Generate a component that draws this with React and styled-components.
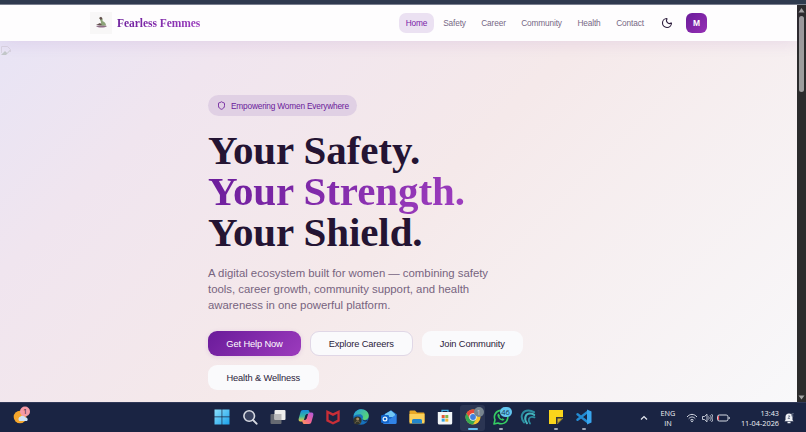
import React from 'react';
import styled, { createGlobalStyle } from 'styled-components';
import { Moon, Shield } from 'lucide-react';

const GlobalStyle = createGlobalStyle`
  * {
    box-sizing: border-box;
  }
  body {
    margin: 0;
    overflow: hidden;
    font-family: 'Liberation Sans', Arial, sans-serif;
  }
`;

const Screen = styled.div`
  display: flex;
  flex-direction: column;
  width: 806px;
  height: 432px;
  overflow: hidden;
`;

const WindowEdge = styled.div`
  flex: none;
  height: 5px;
  background: #2f3c4e;
  border-bottom: 1px solid #7b838e;
`;

const Browser = styled.div`
  display: flex;
  flex: 1;
  min-height: 0;
`;

const Page = styled.main`
  display: flex;
  flex-direction: column;
  flex: 1;
  min-width: 0;
`;

const Header = styled.header`
  position: relative;
  display: flex;
  flex: none;
  align-items: center;
  height: 36px;
  padding: 0 90px;
  background: #fefdfe;
  box-shadow: 0 2px 16px rgba(106, 27, 154, 0.1);
`;

const LogoBox = styled.div`
  display: flex;
  width: 22px;
  height: 22px;
  background: #f8f7f7;
`;

const Brand = styled.span`
  margin-left: 5px;
  font-family: 'Liberation Serif', 'Times New Roman', serif;
  font-weight: 700;
  font-size: 11.5px;
  line-height: 14px;
  letter-spacing: -0.05px;
  color: transparent;
  background: linear-gradient(135deg, #6a1b9a, #9c3fbf);
  background-clip: text;
`;

const Nav = styled.nav`
  display: flex;
  margin-left: auto;
  gap: 4px;
`;

const NavLink = styled.a`
  display: flex;
  align-items: center;
  justify-content: center;
  width: ${(props) => props.$width}px;
  height: 20px;
  border-radius: 7px;
  font-size: 8.3px;
  letter-spacing: -0.14px;
  white-space: nowrap;
  color: ${(props) => (props.$active ? '#7a22a8' : '#776885')};
  background: ${(props) => (props.$active ? '#ebe1f2' : 'transparent')};
`;

const ThemeButton = styled.button`
  display: flex;
  margin: 0 13px 0 12px;
  padding: 0;
  border: 0;
  background: none;
  color: #2a1a3a;
`;

const Avatar = styled.div`
  width: 21px;
  height: 20px;
  border-radius: 6px;
  font-weight: 700;
  font-size: 8.5px;
  line-height: 21px;
  text-align: center;
  color: #fff;
  background: linear-gradient(135deg, #6a1b9a, #9730b5);
`;

const Hero = styled.section`
  display: flex;
  flex: 1;
  min-height: 0;
  background: linear-gradient(135deg, #e8e4f5 0%, #f0e5ef 20%, #f5e9ea 50%, #f8f8fa 100%);
`;

const MissingImage = styled.div`
  width: 208px;
  padding: 1px;
`;

const HeroContent = styled.div`
  width: 325px;
  padding-top: 54px;
`;

const Badge = styled.div`
  display: flex;
  align-items: center;
  gap: 5px;
  width: 149px;
  height: 21px;
  padding-left: 9px;
  border-radius: 11px;
  font-size: 8.3px;
  letter-spacing: -0.19px;
  white-space: nowrap;
  color: #6a1b9a;
  background: #e0d0e4;
`;

const Title = styled.h1`
  margin: 14px 0 0;
  font-family: 'Liberation Serif', 'Times New Roman', serif;
  font-weight: 700;
  font-size: 41px;
  line-height: 41px;
  letter-spacing: -0.1px;
  white-space: nowrap;
  color: #241433;
`;

const TitleLine = styled.span`
  display: block;
`;

// the extra padding keeps the descender inside the clipped gradient
const Accent = styled(TitleLine)`
  width: 260px;
  margin-bottom: -5px;
  padding-bottom: 5px;
  color: transparent;
  background: linear-gradient(135deg, #6a1b9a, #a03fc0);
  background-clip: text;
`;

const Lead = styled.p`
  margin: 12px 0 0;
  font-size: 11.4px;
  line-height: 16px;
  letter-spacing: -0.02px;
  white-space: nowrap;
  color: #776480;
`;

const Actions = styled.div`
  display: flex;
  flex-wrap: wrap;
  gap: 9px;
  margin-top: 18px;
`;

const Button = styled.button`
  width: ${(props) => props.$width}px;
  height: 25px;
  padding: 0;
  border: ${(props) => (props.$outlined ? '1px solid #e0d7e6' : '0')};
  border-radius: 9px;
  font-family: inherit;
  font-size: 9.3px;
  letter-spacing: -0.13px;
  white-space: nowrap;
  color: ${(props) => (props.$primary ? '#fff' : '#2a1a3a')};
  background: ${(props) => (props.$primary ? 'linear-gradient(135deg, #6a1b9a, #9c3bbd)' : '#fafafc')};
  box-shadow: ${(props) => (props.$primary ? '0 1px 5px rgba(106, 27, 154, 0.12)' : 'none')};
`;

const Scrollbar = styled.div`
  display: flex;
  flex-direction: column;
  align-items: center;
  justify-content: space-between;
  width: 9px;
  padding: 3px 0 2px;
  background: #2b2b2c;
`;

const ScrollTop = styled.div`
  display: flex;
  flex-direction: column;
  align-items: center;
  gap: 3px;
`;

const Thumb = styled.div`
  width: 5px;
  height: 76px;
  border-radius: 3px;
  background: #9d9d9d;
`;

const TaskbarRow = styled.footer`
  display: grid;
  grid-template-columns: 208px 390px 1fr;
  flex: none;
  height: 30px;
  border-top: 1px solid #303858;
  font-family: 'Open Sans', 'Noto Sans', sans-serif;
  color: #f0f2f8;
  background: #1a2443;
`;

const Weather = styled.div`
  padding: 3px 0 0 13px;
`;

const Apps = styled.div`
  display: flex;
`;

const AppSlot = styled.div`
  position: relative;
  display: flex;
  align-items: center;
  justify-content: center;
  flex: 1;
`;

const AppFrame = styled.div`
  display: flex;
  align-items: center;
  justify-content: center;
  width: 25px;
  height: 26px;
  padding-bottom: 1px;
  border-radius: 3px;
  background: ${(props) => (props.$active ? '#2b3553' : 'transparent')};
`;

const RunningMark = styled.span`
  position: absolute;
  bottom: 2px;
  left: 50%;
  width: ${(props) => (props.$active ? 10 : 4)}px;
  height: 2px;
  border-radius: 1px;
  transform: translateX(-50%);
  background: ${(props) => (props.$active ? '#63c0ee' : '#a0a6b6')};
`;

const Count = styled.span`
  position: absolute;
  top: 4px;
  left: ${(props) => props.$left}px;
  width: ${(props) => props.$width}px;
  height: 10px;
  border-radius: 5px;
  font-size: 7.5px;
  line-height: 10px;
  text-align: center;
  color: ${(props) => props.$color};
  background: ${(props) => props.$background};
`;

const Tray = styled.div`
  display: flex;
  align-items: center;
  padding-left: 42px;
`;

const TrayText = styled.div`
  width: ${(props) => props.$width}px;
  margin-left: ${(props) => props.$left}px;
  font-size: 7.3px;
  line-height: 10px;
  text-align: ${(props) => props.$align};
  white-space: nowrap;
`;

const TrayIcons = styled.div`
  display: flex;
  align-items: center;
  gap: 4px;
  margin-left: 8px;
`;

const BellIcon = styled.svg`
  margin-left: 5px;
`;

function Icon({ children }) {
  return (
    <svg width="16" height="16" viewBox="0 0 16 16" fill="none">
      {children}
    </svg>
  );
}

const apps = [
  {
    id: 'start',
    icon: (
      <>
        <defs>
          <linearGradient id="start" x1="0" y1="0" x2="1" y2="1">
            <stop stopColor="#8be0fc" />
            <stop offset="1" stopColor="#1ba0ea" />
          </linearGradient>
        </defs>
        <path d="M.5.5h7.1v7.100H.5zM8.300.5h7.200v7.100H8.300zM.5 8.300h7.100v7.200H.5zM8.300 8.300h7.200v7.200H8.300z" fill="url(#start)" />
      </>
    )
  },
  {
    id: 'search',
    icon: (
      <>
        <circle cx="7.2" cy="7" r="5.3" fill="#39425f" stroke="#d5d8e0" strokeWidth="1.6" />
        <path d="m11 11 3.6 3.7" stroke="#d5d8e0" strokeWidth="1.9" strokeLinecap="round" />
      </>
    )
  },
  {
    id: 'tasks',
    icon: (
      <>
        <rect x=".5" y="5" width="11" height="10" rx="1" fill="#666a72" />
        <rect x="4.5" y="1" width="11" height="10" rx="1" fill="#eeeeec" />
        <path d="M4.5 5h7v6h-6a1 1 0 0 1-1-1z" fill="#b9b9b9" />
      </>
    )
  },
  {
    id: 'copilot',
    icon: (
      <>
        <defs>
          <linearGradient id="pilotA" x1="0" y1="0" x2="0" y2="1">
            <stop stopColor="#1689df" />
            <stop offset=".55" stopColor="#36b7a0" />
            <stop offset="1" stopColor="#f3cd3e" />
          </linearGradient>
          <linearGradient id="pilotB" x1="1" y1="0" x2="0" y2="1">
            <stop stopColor="#a759e4" />
            <stop offset=".5" stopColor="#ef6297" />
            <stop offset="1" stopColor="#ff9856" />
          </linearGradient>
        </defs>
        <path d="M5 1h4.5c1.200 0 1.600.6 2 2l.5 2H9.500C8 5 7.500 6 7 7.500l-1 3.200C5.600 12 5 12.500 4 12.500H2.500C.6 12.500.3 11 .8 9.200l1.700-6C2.900 1.800 3.800 1 5 1z" fill="url(#pilotA)" />
        <path d="M11 15H6.500c-1.200 0-1.600-.6-2-2L4 11h2.500C8 11 8.500 10 9 8.500l1-3.200c.4-1.300 1-1.800 2-1.800h1.500c1.900 0 2.200 1.500 1.700 3.300l-1.700 6c-.4 1.400-1.300 2.200-2.500 2.200z" fill="url(#pilotB)" />
        <path d="M7.900 5.700 9.300 5 8.200 10l-1.500.7z" fill="#1a2443" />
      </>
    )
  },
  {
    id: 'mcafee',
    icon: <path d="m1.300 1 6.700 3.300L14.700 1v11.200L8 15.500l-6.700-3.300zM3.600 4.700v6l4.400 2.200 4.400-2.200v-6L8 6.900z" fill="#c92e37" />
  },
  {
    id: 'edge',
    icon: (
      <>
        <defs>
          <linearGradient id="edge" x1="0" y1="0" x2="1" y2=".5">
            <stop stopColor="#249de2" />
            <stop offset="1" stopColor="#58d576" />
          </linearGradient>
        </defs>
        <circle cx="8" cy="8" r="7.7" fill="#1671bd" />
        <path d="M.6 7.200C1.300 3 4.500.3 8.300.3c4.500 0 7.500 3.200 7.500 6.400 0 2.500-1.900 4.200-4.500 4.200-1.600 0-2.300-.7-1.600-1.700.8-1.400-.2-4-3-4-2.400 0-4.600.7-6.100 2z" fill="url(#edge)" />
        <path d="M9.500 9.300c-.3 2 2.700 3 5.500 1.400l-1.300 1.600c-2 .8-4.700-.8-4.200-3z" fill="#1a2443" />
        <circle cx="4.5" cy="11.5" r="4" fill="#343629" />
        <circle cx="4.7" cy="10" r="1.5" fill="#a98c60" />
        <path d="M2 14.500c.3-3 4.800-3 5.200 0" stroke="#766b51" />
      </>
    )
  },
  {
    id: 'mail',
    icon: (
      <>
        <path d="m2 6 8-4.800L15.500 5v9.500H2z" fill="#1764c5" />
        <path d="m4 5 6-3.500L14 5v3H4z" fill="#71c7f4" />
        <path d="m2 7 7 3 6.500-5v8.500a1.500 1.500 0 0 1-1.500 1.500H3.500A1.500 1.500 0 0 1 2 13.500z" fill="#3183e6" />
        <rect y="6" width="8" height="8" rx="1.2" fill="#1264c9" />
        <circle cx="4" cy="10" r="1.9" stroke="#e9f5ff" strokeWidth="1.2" />
      </>
    )
  },
  {
    id: 'files',
    icon: (
      <>
        <path d="M.5 2.500a1 1 0 0 1 1-1H6l2 2h6.500a1 1 0 0 1 1 1V13H.5z" fill="#e8a927" />
        <path d="M.5 5h15v9.500H.5z" fill="#fbd15b" />
        <path d="M3 14.500v-3a1.500 1.500 0 0 1 1.500-1.500h7a1.500 1.500 0 0 1 1.500 1.500v3z" fill="#2386cb" />
      </>
    )
  },
  {
    id: 'store',
    icon: (
      <>
        <path d="M5 4V1.300h6V4" stroke="#42aee4" strokeWidth="1.2" />
        <path d="M.8 3h14.400v11a1.500 1.500 0 0 1-1.500 1.500H2.300A1.500 1.500 0 0 1 .8 14z" fill="#f2f6f9" />
        <path d="M4.700 6h3v3h-3z" fill="#e65a38" />
        <path d="M8.300 6h3v3h-3z" fill="#80b84c" />
        <path d="M4.700 9.600h3v3h-3z" fill="#35a5df" />
        <path d="M8.300 9.600h3v3h-3z" fill="#f4ba35" />
      </>
    )
  },
  {
    id: 'chrome',
    active: true,
    running: true,
    count: { text: '1', left: 15, width: 10, color: '#c9ced2', background: '#78858f' },
    icon: (
      <>
        <circle cx="8" cy="8" r="7.5" fill="#f6c52e" />
        <path d="M1.500 4.250A7.500 7.500 0 0 1 14.500 4.250H8L4.750 9.870z" fill="#e6493a" />
        <path d="M1.500 4.250A7.500 7.500 0 0 0 8 15.500L11.250 9.870H4.750z" fill="#36a853" />
        <circle cx="8" cy="8" r="3.7" fill="#f3f6f7" />
        <circle cx="8" cy="8" r="2.9" fill="#427fdd" />
      </>
    )
  },
  {
    id: 'whatsapp',
    running: true,
    count: { text: '46', left: 13, width: 12, color: '#173650', background: '#61c4ef' },
    icon: (
      <>
        <path d="m1 15 1-4.200A6.700 6.700 0 1 1 5 14z" stroke="#35cc63" strokeWidth="1.6" strokeLinejoin="round" />
        <path d="M5.500 4.500 4.400 5.800c0 3 2.700 5.600 5.600 5.900l1.500-1.200-2-1.200-.9.700c-1-.5-1.800-1.300-2.200-2.300l.7-.8z" fill="#35cc63" />
      </>
    )
  },
  {
    id: 'waves',
    icon: (
      <g strokeLinecap="round">
        <path d="M4 13.500C-1 7 3 1.500 8.500 1.500c2.400 0 4 .7 5.500 1.700" stroke="#2b8da0" strokeWidth="2" />
        <path d="M7 14.300C3.500 9.500 5.500 4.600 10 4.600c1.800 0 3 .5 4.200 1.300" stroke="#43b3bd" strokeWidth="2" />
        <path d="M10 14.600C7.500 11 9 7.800 12 7.800c1 0 1.800.2 2.500.6" stroke="#2b8da0" strokeWidth="1.8" />
      </g>
    )
  },
  {
    id: 'notes',
    running: true,
    icon: (
      <>
        <path d="M1 1h14v14H1z" fill="#fad51b" />
        <path d="M8 8h7v1l-6 6H8z" fill="#33353a" />
        <path d="M9.500 9.500H14L9.500 14z" fill="#d5b32d" />
        <path d="M15 9.500V15H9.500z" fill="#1a2443" />
      </>
    )
  },
  {
    id: 'code',
    running: true,
    icon: (
      <>
        <path d="m11.500 3-10 7.800M1.500 5.200l10 7.800" stroke="#238bd3" strokeWidth="2.4" strokeLinecap="round" />
        <path d="m11 .5 4.500 2v11l-4.500 2z" fill="#38a5ee" />
      </>
    )
  }
];

const links = [
  { label: 'Home', width: 35 },
  { label: 'Safety', width: 33 },
  { label: 'Career', width: 37 },
  { label: 'Community', width: 51 },
  { label: 'Health', width: 36 },
  { label: 'Contact', width: 38 }
];

function SiteHeader() {
  return (
    <Header>
      <LogoBox>
        <svg width="22" height="22" viewBox="0 0 22 22" fill="none">
          <path d="M6 14c2 2 9 2 11 0-2-1-9-1-11 0z" fill="#8e6d86" />
          <path d="M9.500 6c2-1 4 1 3 3 2 1 3.500 2 3.500 4.500H9.500c1.500-2 2-3 1-4.500z" fill="#8ca378" />
          <path d="m9 6 2-1.200 1.500 1.500L11 8zM6 13l4-2 2 2z" fill="#604e4a" />
        </svg>
      </LogoBox>
      <Brand>Fearless Femmes</Brand>
      <Nav>
        {links.map((link, index) => (
          <NavLink key={link.label} $width={link.width} $active={index === 0}>
            {link.label}
          </NavLink>
        ))}
      </Nav>
      <ThemeButton aria-label="Theme">
        <Moon size={12} strokeWidth={2.2} />
      </ThemeButton>
      <Avatar>M</Avatar>
    </Header>
  );
}

function HeroSection() {
  return (
    <Hero>
      <MissingImage>
        <svg width="10" height="10" viewBox="0 0 10 10" fill="none">
          <path d="M.5 7V.5h6l3 3V6" stroke="#d9d3e0" />
          <path d="m0 9 4-4 2 2 3-3v1L5 9z" fill="#c3c8c9" />
        </svg>
      </MissingImage>
      <HeroContent>
        <Badge>
          <Shield size={9} strokeWidth={2.3} />
          Empowering Women Everywhere
        </Badge>
        <Title>
          <TitleLine>Your Safety.</TitleLine>
          <Accent>Your Strength.</Accent>
          <TitleLine>Your Shield.</TitleLine>
        </Title>
        <Lead>
          A digital ecosystem built for women — combining safety
          <br />
          tools, career growth, community support, and health
          <br />
          awareness in one powerful platform.
        </Lead>
        <Actions>
          <Button $width={93} $primary>
            Get Help Now
          </Button>
          <Button $width={102.500} $outlined>
            Explore Careers
          </Button>
          <Button $width={101.500}>Join Community</Button>
          <Button $width={110.500}>Health &amp; Wellness</Button>
        </Actions>
      </HeroContent>
    </Hero>
  );
}

function Taskbar() {
  return (
    <TaskbarRow>
      <Weather>
        <svg width="18" height="20" viewBox="0 0 18 20" fill="none">
          <circle cx="7" cy="11" r="6.3" fill="#f5a62c" />
          <path d="M6.500 15a2.500 2.500 0 0 1 1-4.500 3 3 0 0 1 5 1 2 2 0 0 1 1.500 3.500z" fill="#cfe3f7" />
          <circle cx="12" cy="5.5" r="5" fill="#f59aa5" />
          <text x="10" y="8.200" fontSize="7.500" fill="#33202c">
            1
          </text>
        </svg>
      </Weather>
      <Apps>
        {apps.map((app) => (
          <AppSlot key={app.id}>
            <AppFrame $active={app.active}>
              <Icon>{app.icon}</Icon>
            </AppFrame>
            {app.count && (
              <Count
                $left={app.count.left}
                $width={app.count.width}
                $color={app.count.color}
                $background={app.count.background}
              >
                {app.count.text}
              </Count>
            )}
            {app.running && <RunningMark $active={app.active} />}
          </AppSlot>
        ))}
      </Apps>
      <Tray>
        <svg width="8" height="8" viewBox="0 0 8 8" fill="none">
          <path d="m1 5.500 3-3 3 3" stroke="#e4e7ef" strokeWidth="1.2" />
        </svg>
        <TrayText $width={20} $left={10} $align="center">
          ENG
          <br />
          IN
        </TrayText>
        <TrayIcons>
          <svg width="12" height="10" viewBox="0 0 12 10" fill="none" stroke="#d5d9e3">
            <path d="M1 4c3-3.500 7-3.500 10 0M2.700 5.700c2-2.300 4.600-2.300 6.600 0M4.300 7.300c1-1.200 2.400-1.200 3.400 0" />
            <circle cx="6" cy="8.3" r=".5" fill="#d5d9e3" />
          </svg>
          <svg width="11" height="10" viewBox="0 0 11 10" fill="none" stroke="#d5d9e3" strokeWidth=".9">
            <path d="M.5 3.500h2L5 1.200v7.600L2.500 6.500h-2zM6.500 3.500c.8 1 .8 2 0 3M8 2.200c1.600 1.800 1.600 3.800 0 5.600M9.500 1c2 2.500 2 5.500 0 8" />
          </svg>
          <svg width="13" height="8" viewBox="0 0 13 8" fill="none">
            <rect x=".5" y="1" width="10.5" height="6" rx="1.8" stroke="#d5d9e3" />
            <path d="M12.200 3v2" stroke="#d5d9e3" />
            <path d="M1.500 2v4" stroke="#ed5260" strokeWidth="1.2" />
          </svg>
        </TrayIcons>
        <TrayText $width={40} $left={9} $align="right">
          13:43
          <br />
          11-04-2026
        </TrayText>
        <BellIcon width="11" height="12" viewBox="0 0 11 12" fill="none">
          <path d="M1.500 8V5a3.500 3.500 0 0 1 7 0v3l1 1.300h-9z" fill="#eef0f5" />
          <path d="M3.500 10.500h3" stroke="#eef0f5" strokeWidth="1.5" />
          <path d="M4 4h2L4 6.500h2M7.500 1.500h2l-2 2.500h2" stroke="#657087" strokeWidth=".8" />
        </BellIcon>
      </Tray>
    </TaskbarRow>
  );
}

export default function App() {
  return (
    <>
      <GlobalStyle />
      <Screen>
        <WindowEdge />
        <Browser>
          <Page>
            <SiteHeader />
            <HeroSection />
          </Page>
          <Scrollbar>
            <ScrollTop>
              <svg width="7" height="5" viewBox="0 0 7 5">
                <path d="M3.500 0 6.500 4.500h-6z" fill="#a2a2a2" />
              </svg>
              <Thumb />
            </ScrollTop>
            <svg width="7" height="5" viewBox="0 0 7 5">
              <path d="M.5.5h6l-3 4z" fill="#a2a2a2" />
            </svg>
          </Scrollbar>
        </Browser>
        <Taskbar />
      </Screen>
    </>
  );
}
